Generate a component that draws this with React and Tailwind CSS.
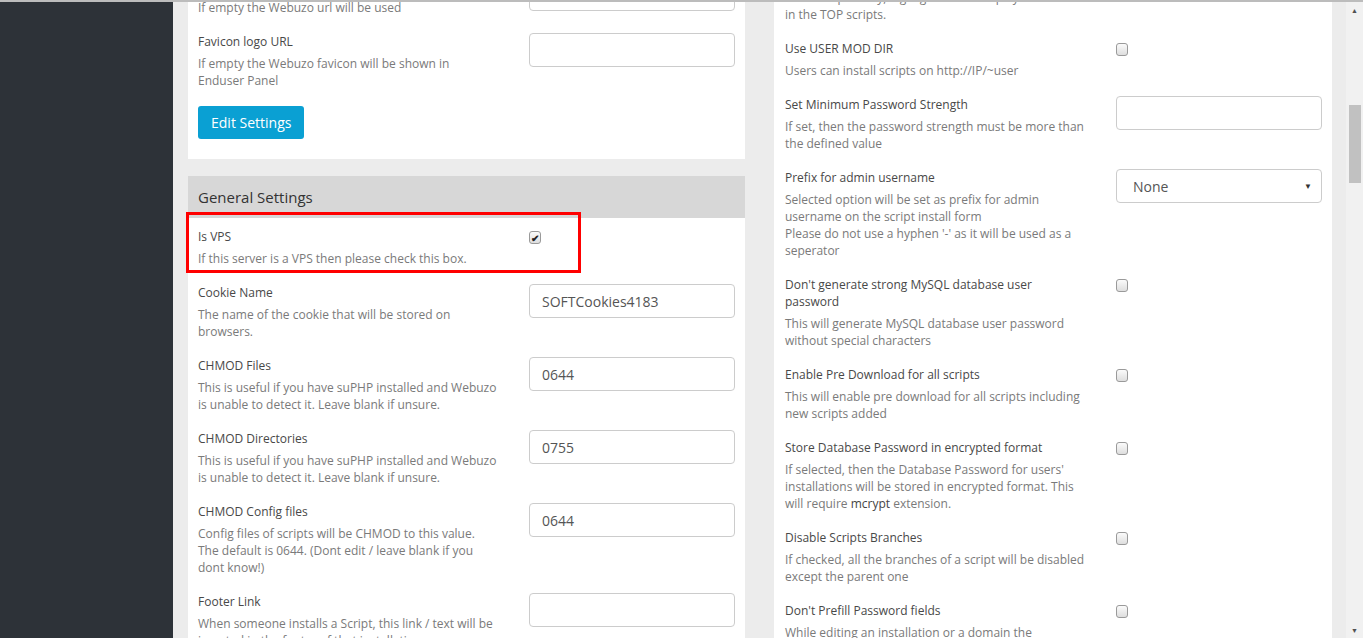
import React from "react";

const font = { fontFamily: '"Open Sans", "Noto Sans", sans-serif' };

function Checkbox({ checked }) {
  return (
    <div className="mt-[3px] w-[12px] h-[13px] rounded-[3px] border border-[#9a9a9a] bg-gradient-to-b from-[#fbfbfb] to-[#dedede] flex items-center justify-center text-[10px] font-bold leading-none text-[#222]">
      {checked ? "✔" : null}
    </div>
  );
}

function Input({ value }) {
  return (
    <div className="h-[34px] w-full rounded-[4px] border border-[#cccccc] bg-white px-[12px] flex items-center text-[14px] text-[#555]">
      {value}
    </div>
  );
}

function Select({ value }) {
  return (
    <div className="h-[34px] w-full rounded-[4px] border border-[#cccccc] bg-white pl-[16px] pr-[9px] flex items-center justify-between text-[14px] text-[#555]">
      <span>{value}</span>
      <span className="text-[8px] text-[#333]">▼</span>
    </div>
  );
}

function Row({ label, desc, control, children }) {
  return (
    <div className="relative flex pb-[17px]">
      {children}
      <div className="w-[300px] mr-[31px]">
        <div className="text-[12px] leading-[17px] font-medium text-[#484848] mb-[5px]">{label}</div>
        <div className="text-[12px] leading-[17px] text-[#7a7a7a]">{desc}</div>
      </div>
      <div className="w-[206px]">{control}</div>
    </div>
  );
}

export default function App() {
  return (
    <div className="h-[638px] w-[1363px] overflow-hidden flex flex-col bg-[#ececec]" style={font}>
      <div className="h-[2px] bg-[#bcbcbc] shrink-0" />
      <div className="flex-1 flex overflow-hidden">
        <div className="w-[173px] bg-[#2d3238] shrink-0" />
        <div className="w-[15px] shrink-0" />
        {/* Left column */}
        <div className="w-[557px] shrink-0 flex flex-col">
          <div className="bg-white px-[10px] pt-[10px] pb-[20px] -mt-[35px]">
            <Row label="Logo URL" desc="If empty the Webuzo url will be used" control={<Input value="" />} />
            <Row
              label="Favicon logo URL"
              desc={
                <>
                  If empty the Webuzo favicon will be shown in
                  <br />
                  Enduser Panel
                </>
              }
              control={<Input value="" />}
            />
            <button className="h-[33px] px-[13px] rounded-[3px] bg-[#0aa0d3] text-white text-[14px]">Edit Settings</button>
          </div>
          <div className="mt-[17px] bg-white flex-1">
            <div className="h-[42px] bg-[#d7d7d7] px-[10px] flex items-center text-[15px] text-[#333]">General Settings</div>
            <div className="px-[10px] pt-[10px]">
              <Row label="Is VPS" desc="If this server is a VPS then please check this box." control={<Checkbox checked />}>
                <div className="absolute left-[-12px] top-[-16px] w-[395px] h-[61px] border-[3px] border-[#ff0000] pointer-events-none" />
              </Row>
              <Row label="Cookie Name" desc="The name of the cookie that will be stored on browsers." control={<Input value="SOFTCookies4183" />} />
              <Row
                label="CHMOD Files"
                desc="This is useful if you have suPHP installed and Webuzo is unable to detect it. Leave blank if unsure."
                control={<Input value="0644" />}
              />
              <Row
                label="CHMOD Directories"
                desc="This is useful if you have suPHP installed and Webuzo is unable to detect it. Leave blank if unsure."
                control={<Input value="0755" />}
              />
              <Row
                label="CHMOD Config files"
                desc={
                  <>
                    Config files of scripts will be CHMOD to this value.
                    <br />
                    The default is 0644. (Dont edit / leave blank if you
                    <br />
                    dont know!)
                  </>
                }
                control={<Input value="0644" />}
              />
              <Row
                label="Footer Link"
                desc="When someone installs a Script, this link / text will be inserted in the footer of that installation."
                control={<Input value="" />}
              />
            </div>
          </div>
        </div>
        <div className="w-[29px] shrink-0" />
        {/* Right column */}
        <div className="w-[558px] shrink-0 bg-white pl-[11px] pr-[10px] pt-[10px] -mt-[62px]">
          <Row
            label="Show in TOP scripts"
            desc={
              <>
                If enabled, the scripts rated highly will be
                <br />
                shown separately, highlighted and displayed
                <br />
                in the TOP scripts.
              </>
            }
            control={<Checkbox />}
          />
          <Row label="Use USER MOD DIR" desc="Users can install scripts on http://IP/~user" control={<Checkbox />} />
          <Row
            label="Set Minimum Password Strength"
            desc="If set, then the password strength must be more than the defined value"
            control={<Input value="" />}
          />
          <Row
            label="Prefix for admin username"
            desc={
              <>
                Selected option will be set as prefix for admin username on the script install form
                <br />
                Please do not use a hyphen '-' as it will be used as a seperator
              </>
            }
            control={<Select value="None" />}
          />
          <Row
            label="Don't generate strong MySQL database user password"
            desc="This will generate MySQL database user password without special characters"
            control={<Checkbox />}
          />
          <Row
            label="Enable Pre Download for all scripts"
            desc="This will enable pre download for all scripts including new scripts added"
            control={<Checkbox />}
          />
          <Row
            label="Store Database Password in encrypted format"
            desc={
              <>
                If selected, then the Database Password for users' installations will be stored in encrypted format. This will require{" "}
                <span className="text-[#444]">mcrypt</span> extension.
              </>
            }
            control={<Checkbox />}
          />
          <Row
            label="Disable Scripts Branches"
            desc={
              <>
                If checked, all the branches of a script will be disabled
                <br />
                except the parent one
              </>
            }
            control={<Checkbox />}
          />
          <Row
            label="Don't Prefill Password fields"
            desc={
              <>
                While editing an installation or a domain the
                <br />
                password fields will not be prefilled.
              </>
            }
            control={<Checkbox />}
          />
        </div>
        <div className="w-[14px] shrink-0" />
        {/* Scrollbar */}
        <div className="w-[17px] shrink-0 bg-[#f1f1f1] flex flex-col items-center">
          <div className="h-[16px] flex items-center justify-center text-[7px] text-[#505050] leading-none">▲</div>
          <div className="mt-[87px] w-[12px] h-[78px] bg-[#c1c1c1]" />
          <div className="flex-1" />
          <div className="h-[16px] flex items-center justify-center text-[7px] text-[#505050] leading-none">▼</div>
        </div>
      </div>
    </div>
  );
}
